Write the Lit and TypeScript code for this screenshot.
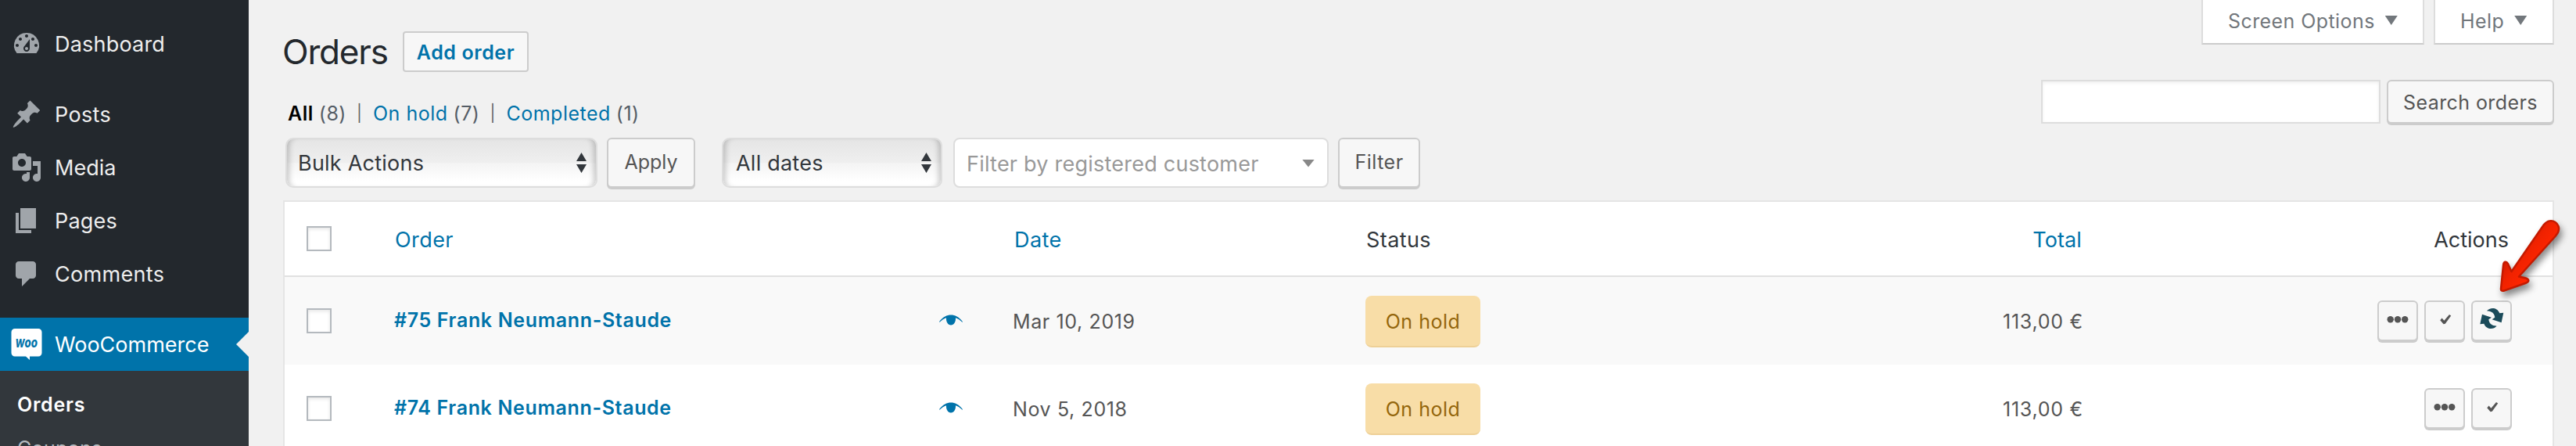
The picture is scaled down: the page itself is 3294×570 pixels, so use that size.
import { LitElement, html, css, svg } from "lit";
import { customElement } from "lit/decorators.js";

const ICONS = {
  dashboard:
    "M3.76 16h12.48A7.998 7.998 0 0 0 10 3a7.998 7.998 0 0 0-6.24 13zM10 4c.55 0 1 .45 1 1s-.45 1-1 1-1-.45-1-1 .45-1 1-1zM6 6c.55 0 1 .45 1 1s-.45 1-1 1-1-.45-1-1 .45-1 1-1zm8 0c.55 0 1 .45 1 1s-.45 1-1 1-1-.45-1-1 .45-1 1-1zm-5.37 5.55L12 7v6c0 1.1-.9 2-2 2s-2-.9-2-2c0-.57.24-1.08.63-1.45zM4 10c.55 0 1 .45 1 1s-.45 1-1 1-1-.45-1-1 .45-1 1-1zm12 0c.55 0 1 .45 1 1s-.45 1-1 1-1-.45-1-1 .45-1 1-1zm-5 3c0-.55-.45-1-1-1s-1 .45-1 1 .45 1 1 1 1-.45 1-1z",
  posts:
    "M10.44 3.02l1.82-1.82 6.36 6.35-1.83 1.82c-1.05-.68-2.48-.57-3.41.36l-.75.75c-.92.93-1.04 2.35-.35 3.41l-1.83 1.82-2.41-2.41-2.8 2.79c-.42.42-3.38 2.71-3.8 2.29s1.86-3.39 2.28-3.81l2.79-2.79L4.1 9.36l1.83-1.82c1.05.69 2.48.57 3.4-.36l.75-.75c.93-.92 1.05-2.35.36-3.41z",
  media:
    "M13 11V4c0-.55-.45-1-1-1h-1.67L9 1H5L3.67 3H2c-.55 0-1 .45-1 1v7c0 .55.45 1 1 1h10c.55 0 1-.45 1-1zM7 4.5c1.38 0 2.5 1.12 2.5 2.5S8.38 9.5 7 9.5 4.5 8.38 4.5 7 5.62 4.5 7 4.5zM14 6h5v10.5c0 1.38-1.12 2.5-2.5 2.5S14 17.88 14 16.5s1.12-2.5 2.5-2.5c.17 0 .34.02.5.05V9h-3V6zm-4 8.05V13h2v3.5c0 1.38-1.12 2.5-2.5 2.5S7 17.88 7 16.5 8.12 14 9.5 14c.17 0 .34.02.5.05z",
  pages: "M6 15V2h10v13H6zm-1 1h8v2H3V5h2v11z",
  comments:
    "M5 2h9c1.1 0 2 .9 2 2v7c0 1.1-.9 2-2 2h-2l-5 5v-5H5c-1.1 0-2-.9-2-2V4c0-1.1.9-2 2-2z",
};

const menuIcon = (d: string) =>
  html`<svg class="ico" viewBox="0 0 20 20"><path fill-rule="evenodd" d=${d} /></svg>`;

const wooIcon = html`<svg class="ico woo" viewBox="0 0 40 40">
  <path d="M5 0h30a4.500 4.500 0 0 1 4.500 4.500v26.500a4.500 4.500 0 0 1-4.500 4.500H24v4.500l-5-4.500H5a4.500 4.500 0 0 1-4.500-4.500V4.500A4.500 4.500 0 0 1 5 0z" />
  <text x="5.500" y="23.500" textLength="28.500" lengthAdjust="spacingAndGlyphs">W<tspan class="oo">oo</tspan></text>
</svg>`;

const upDown = html`<svg class="updn" viewBox="0 0 13 26">
  <path d="M0 11L6.500 0L13 11zM0 15h13L6.500 26z" />
</svg>`;

const eye = html`<svg class="eye" viewBox="0 0 30 14">
  <path d="M.3 8.800C5 2.800 9.800.4 15 .4s10 2.400 14.700 8.400v1.200C27 7.500 24.300 5.500 21 4.300c.3 5.500-2.200 9.100-6 9.100s-6.300-3.600-6-9.100C5.700 5.500 3 7.500.3 10z" />
</svg>`;

const dots = html`<svg class="glyph" viewBox="0 0 52 50">
  <circle cx="16.700" cy="24.200" r="4.200" /><circle cx="26" cy="24.200" r="4.200" /><circle cx="35.200" cy="24.200" r="4.200" />
</svg>`;

const check = html`<svg class="glyph" viewBox="0 0 52 50">
  <path d="M20.300 25.200L22.600 22.600L25.400 25.800L32 17.900L34.200 19.600L26.800 29.800L24.600 30.200z" />
</svg>`;

const half = svg`<path d="M-19-29C-8-42 20-45 30-20L45-22L37 16L1 4L12-4C10-20 0-28-19-29z" />`;
const halfTurned = svg`<g transform="rotate(180)"><path d="M-19-29C-8-42 20-45 30-20L45-22L37 16L1 4L12-4C10-20 0-28-19-29z" /></g>`;
const sync = html`<svg class="glyph sync" viewBox="0 0 52 50">
  <g transform="translate(26.300 23) scale(.333)">${half}${halfTurned}</g>
</svg>`;

const pointer = html`<svg class="pointer" viewBox="0 0 110 130">
  <defs>
    <linearGradient id="red" gradientUnits="userSpaceOnUse" x1="36" y1="40" x2="66" y2="64">
      <stop offset="0" stop-color="#d41c00" /><stop offset=".45" stop-color="#f02200" /><stop offset="1" stop-color="#ff2600" />
    </linearGradient>
  </defs>
  <path fill="url(#red)" stroke="#c41a00" stroke-width="2.500" stroke-linejoin="round"
    d="M14 99L17 69C17.500 64 21 63.500 23 67L27.500 77L69 17C78 6 92 16 87 27C86 29 85 30 84 31.500L37 83.500L46 85.500C50 87 50.500 89.500 46.500 91.500L18 101.500C15.500 102.300 13.800 101.500 14 99z" />
</svg>`;

const MENU = [
  { label: "Dashboard", icon: ICONS.dashboard, cls: "s2" },
  { label: "Posts", icon: ICONS.posts, cls: "s3" },
  { label: "Media", icon: ICONS.media, cls: "s0" },
  { label: "Pages", icon: ICONS.pages, cls: "s2" },
  { label: "Comments", icon: ICONS.comments, cls: "s3" },
];

const ORDERS = [
  { name: "#75 Frank Neumann-Staude", date: "Mar 10, 2019", actions: [dots, check, sync] },
  { name: "#74 Frank Neumann-Staude", date: "Nov 5, 2018", actions: [dots, check] },
];

@customElement("app-root")
export class AppRoot extends LitElement {
  static styles = css`
    :host { display: flex; position: relative; width: 3294px; height: 570px; overflow: hidden; background: #f1f1f1;
      font-family: Inter, "Liberation Sans", sans-serif; font-size: 25px; line-height: 36px; color: #555; white-space: nowrap; }
    * { box-sizing: border-box; }
    i { font-style: normal; }
    svg { display: block; flex: none; }
    .s0 { letter-spacing: 0; }
    .s2 { letter-spacing: .2px; }
    .s3 { letter-spacing: .32px; }
    .side { width: 318px; flex: none; background: #23282d; padding-top: 22px; font-size: 27px; color: #eee; }
    .item { display: flex; align-items: center; height: 68px; padding-left: 14px; gap: 16px; }
    .item span { padding-top: 1px; }
    .gap { margin-top: 22px; }
    .ico { width: 40px; height: 40px; fill: #a0a5aa; }
    .woo { fill: #fff; }
    .woo text { fill: #0073aa; font-size: 15px; font-weight: 800; font-style: italic; }
    .woo .oo { font-size: 17.5px; }
    .active { background: #0073aa; color: #fff; }
    .notch { margin-left: auto; width: 16px; height: 32px; background: #f1f1f1; clip-path: polygon(0 50%, 100% 0, 100% 100%); }
    .sub { background: #32373c; height: 110px; padding: 25px 0 0 22px; display: flex; flex-direction: column; gap: 20px; font-size: 25px; color: #b4b9be; }
    .cur { color: #fff; font-weight: 600; letter-spacing: .75px; }
    .main { flex: 1; padding-left: 44px; min-width: 0; }
    .top { display: flex; justify-content: space-between; height: 158px; padding-right: 28px; }
    .headL { padding-top: 40px; }
    .title { display: flex; align-items: center; height: 52px; }
    h1 { margin: 0 1px 0 -1px; width: 153px; font-size: 44px; font-weight: 400; color: #23282d; line-height: 52px; letter-spacing: -1.2px; }
    .add { width: 161px; height: 52px; border: 2px solid #ccc; border-radius: 4px; background: #f7f7f7; color: #0073aa; font-weight: 600; letter-spacing: .58px; padding-top: 7px; display: flex; justify-content: center; }
    .views { display: flex; margin-top: 35px; padding-left: 6px; color: #555d66; letter-spacing: .5px; }
    .views b { color: #000; font-weight: 600; }
    .views span { margin-left: 7px; }
    .views i { margin: 0 13.5px 0 13px; font-size: 21px; line-height: 35px; color: #666; }
    .views a, .link { color: #0073aa; }
    .headR { display: flex; flex-direction: column; align-items: flex-end; }
    .tabs { display: flex; gap: 12px; letter-spacing: .42px; }
    .tab { height: 57px; border: 2px solid #ddd; border-top: 0; border-bottom-color: #ccc; background: #fff; color: #72777c; display: flex; padding: 9px 0 0 32px; }
    .so { width: 285px; }
    .help { width: 154px; }
    .tri { width: 16px; height: 12px; margin: 11px 0 0 13px; background: currentColor; clip-path: polygon(0 0, 100% 0, 50% 100%); }
    .search { display: flex; gap: 8px; margin-top: 45px; }
    .box { width: 434px; height: 56px; border: 2px solid #ddd; background: #fff; box-shadow: inset 0 2px 4px rgba(0,0,0,.07); }
    .btn { border: 2px solid #ccc; border-radius: 6px; background: #f7f7f7; box-shadow: 0 2px 0 #ccc; color: #555; display: flex; justify-content: center; }
    .sb { width: 214px; height: 56px; padding-top: 9px; letter-spacing: .42px; }
    .filters { display: flex; height: 64px; margin: 18px 0 0 3px; color: #32373c; font-size: 27px; letter-spacing: .23px; }
    .select { height: 64px; border: 2px solid #ddd; border-radius: 10px; display: flex; align-items: center; justify-content: space-between;
      background: linear-gradient(#e5e5e5, #efefef 50%, #f4f4f4 51%, #fff 90%); box-shadow: inset 8px 0 7px -5px rgba(0,0,0,.2), inset -8px 0 7px -5px rgba(0,0,0,.2); padding: 2px 12px 0 15px; }
    .bulk { width: 399px; }
    .dates { width: 282px; margin-left: 34px; padding-left: 16px; }
    .bulk span { margin-left: -1px; }
    .updn { width: 13px; height: 26px; fill: #32373c; margin-top: -2px; }
    .apply { width: 113px; height: 64px; margin-left: 12px; padding-top: 11px; font-size: 25px; letter-spacing: 0; }
    .cust { width: 480px; height: 64px; border: 2px solid #ddd; border-radius: 8px; background: #fff; color: #999; margin-left: 14px; display: flex; align-items: center; justify-content: space-between; padding: 4px 16px 0 15px; }
    .cust .tri { height: 10px; margin: 0 0 3px; color: #888; }
    .filter { width: 105px; height: 64px; margin-left: 12px; padding-top: 11px; font-size: 25px; letter-spacing: .5px; }
    .table { width: 2904px; margin-top: 16px; border: 2px solid #e5e5e5; height: 340px; background: #fff; }
    .row { display: grid; grid-template-columns: 140px 792px 450px 500px 417px 1fr; height: 112px; align-items: center; padding-right: 52px; letter-spacing: .62px; }
    .head { height: 96px; border-bottom: 2px solid #e1e1e1; font-size: 27px; color: #32373c; padding-top: 4px; letter-spacing: .42px; }
    .head span { padding-left: 1px; }
    .head .tot { letter-spacing: .1px; padding-right: 1px; }
    .head .ac { letter-spacing: 0; padding-right: 4px; }
    .odd { background: #f9f9f9; }
    .cb { width: 32px; height: 32px; margin-left: 28px; border: 2px solid #b4b9be; background: #fff; box-shadow: inset 0 2px 4px rgba(0,0,0,.1); }
    .head .cb { margin-top: -5px; }
    .name { display: flex; align-items: center; justify-content: space-between; padding-right: 65px; color: #0073aa; font-weight: 600; letter-spacing: .64px; margin-top: -2px; }
    .date { margin: 2px 0 0 -1px; }
    .eye { width: 30px; height: 14px; fill: #0073aa; }
    .badge { justify-self: start; width: 147px; height: 66px; border-radius: 8px; background: #f8dda7; border-bottom: 2px solid #eed097; color: #94660c; display: flex; justify-content: center; padding-top: 15px; margin-top: 2px; letter-spacing: .5px; }
    .r { text-align: right; }
    .price { margin: 2px -1px 0 0; letter-spacing: .75px; }
    .acts { display: flex; justify-content: flex-end; gap: 8px; }
    .act { width: 52px; height: 52px; }
    .glyph { width: 52px; height: 50px; margin: -2px; fill: #555; }
    .sync { fill: #1b4b5a; }
    .pointer { position: absolute; left: 3184px; top: 270px; width: 110px; height: 130px; filter: drop-shadow(3px 6px 4px rgba(0,0,0,.45)); }
  `;

  render() {
    return html`
      <nav class="side">
        ${MENU.map((m, i) => html`<div class="item ${i === 1 ? "gap" : ""}">${menuIcon(m.icon)}<span class=${m.cls}>${m.label}</span></div>`)}
        <div class="item gap active">${wooIcon}<span>WooCommerce</span><i class="notch"></i></div>
        <div class="sub"><span class="cur">Orders</span><span class="s3">Coupons</span></div>
      </nav>
      <main class="main">
        <div class="top">
          <div class="headL">
            <div class="title"><h1>Orders</h1><span class="add">Add order</span></div>
            <div class="views"><b>All</b><span>(8)</span><i>|</i><a>On hold</a><span>(7)</span><i>|</i><a>Completed</a><span>(1)</span></div>
          </div>
          <div class="headR">
            <div class="tabs">
              <div class="tab so"><span>Screen Options</span><i class="tri"></i></div>
              <div class="tab help"><span>Help</span><i class="tri"></i></div>
            </div>
            <div class="search"><div class="box"></div><div class="btn sb"><span>Search orders</span></div></div>
          </div>
        </div>
        <div class="filters">
          <div class="select bulk"><span>Bulk Actions</span>${upDown}</div>
          <div class="btn apply"><span>Apply</span></div>
          <div class="select dates"><span>All dates</span>${upDown}</div>
          <div class="cust"><span>Filter by registered customer</span><i class="tri"></i></div>
          <div class="btn filter"><span>Filter</span></div>
        </div>
        <div class="table">
          <div class="row head">
            <i class="cb"></i><span class="link">Order</span><span class="link">Date</span><span>Status</span>
            <span class="link r tot">Total</span><span class="r ac">Actions</span>
          </div>
          ${ORDERS.map((o, i) => html`<div class="row ${i === 0 ? "odd" : ""}">
            <i class="cb"></i>
            <div class="name"><span>${o.name}</span>${eye}</div>
            <span class="date">${o.date}</span>
            <span class="badge"><span>On hold</span></span>
            <span class="r price">113,00 €</span>
            <div class="acts">${o.actions.map((a) => html`<span class="btn act">${a}</span>`)}</div>
          </div>`)}
        </div>
      </main>
      ${pointer}`;
  }
}
